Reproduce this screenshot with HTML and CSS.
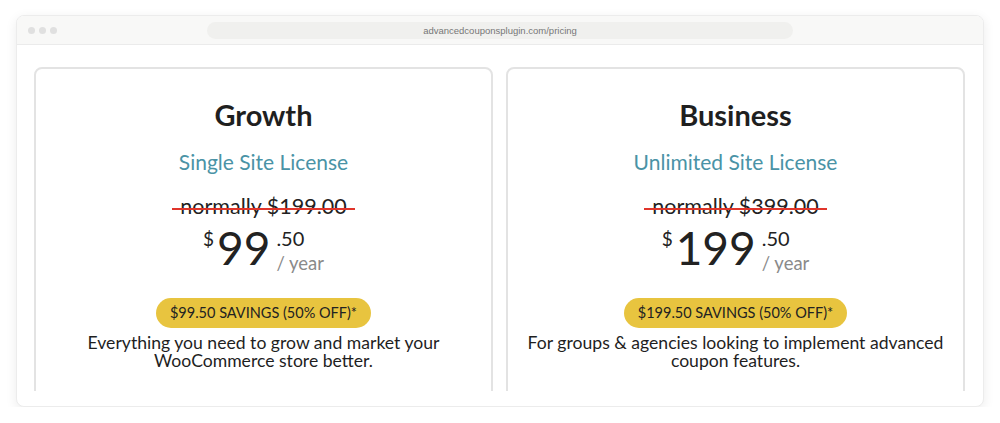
FILE: index.html
```html
<!DOCTYPE html>
<html lang="en">
<head>
    <meta charset="UTF-8">
    <meta name="viewport" content="width=device-width, initial-scale=1.0">
    <title>Pricing</title>
    <link rel="stylesheet" href="styles.css">
</head>
<body>

    <!-- Browser window -->
    <div class="window">
        <div class="titlebar">
            <div class="dots">
                <span class="dot"></span>
                <span class="dot"></span>
                <span class="dot"></span>
            </div>
            <div class="url">advancedcouponsplugin.com/pricing</div>
            <div></div>
        </div>

        <div class="content">
            <!-- Growth plan -->
            <div class="card">
                <h2 class="plan-name">Growth</h2>
                <p class="license">Single Site License</p>
                <p class="normal"><span class="strike">normally $199.00</span></p>
                <div class="price">
                    <span class="currency">$</span>
                    <span class="amount">99</span>
                    <span class="side">
                        <span class="cents">.50</span>
                        <span class="period">/ year</span>
                    </span>
                </div>
                <span class="savings">$99.50 SAVINGS (50% OFF)*</span>
                <p class="desc">Everything you need to grow and market your WooCommerce store better.</p>
            </div>

            <!-- Business plan -->
            <div class="card">
                <h2 class="plan-name">Business</h2>
                <p class="license">Unlimited Site License</p>
                <p class="normal"><span class="strike">normally $399.00</span></p>
                <div class="price">
                    <span class="currency">$</span>
                    <span class="amount">199</span>
                    <span class="side">
                        <span class="cents">.50</span>
                        <span class="period">/ year</span>
                    </span>
                </div>
                <span class="savings">$199.50 SAVINGS (50% OFF)*</span>
                <p class="desc">For groups &amp; agencies looking to implement advanced coupon features.</p>
            </div>
        </div>
    </div>

</body>
</html>
```

FILE: styles.css
```css
body {
    margin: 0;
    padding: 0;
    background-color: #ffffff;
    color: #222222;
    font-family: Lato, "Open Sans", sans-serif;
}

/* Browser window */
.window {
    margin: 15px 16px 0 16px;
    height: 392px;
    border: 1px solid #ececec;
    border-radius: 8px;
    box-shadow: 0 3px 12px rgba(0, 0, 0, 0.08);
    overflow: hidden;
    box-sizing: border-box;
    background-color: #ffffff;
}

.titlebar {
    height: 28px;
    background-color: #f8f8f7;
    border-bottom: 1px solid #ebebeb;
    display: grid;
    grid-template-columns: 1fr 586px 1fr;
    align-items: center;
}

.dots {
    display: flex;
    gap: 4px;
    padding-left: 11px;
}

.dot {
    width: 7px;
    height: 7px;
    border-radius: 50%;
    background-color: #e0e0e0;
}

.url {
    height: 17px;
    line-height: 17px;
    border-radius: 9px;
    background-color: #f0f0ee;
    color: #777777;
    font-family: "Liberation Sans", Arial, sans-serif;
    font-size: 9.5px;
    text-align: center;
}

/* Pricing cards */
.content {
    box-sizing: border-box;
    height: 346px;
    overflow: hidden;
    padding: 22px 18px 0 17px;
    display: grid;
    grid-template-columns: 1fr 1fr;
    gap: 13px;
}

.card {
    border: 2px solid #e3e3e3;
    border-radius: 8px;
    height: 400px;
    padding: 29px 8px 0 8px;
    text-align: center;
}

.plan-name {
    margin: 0;
    font-size: 29px;
    line-height: 34px;
    font-weight: 700;
    color: #1f1f1f;
}

.license {
    margin: 17px 0 0 0;
    font-size: 21px;
    line-height: 26px;
    color: #4a93a6;
}

.normal {
    margin: 18px 0 0 0;
    font-size: 21.5px;
    line-height: 26px;
    color: #222222;
}

.strike {
    position: relative;
    padding: 0 8px;
}

.strike::after {
    content: "";
    position: absolute;
    left: 0;
    right: 0;
    top: 15px;
    height: 2px;
    background-color: #e0352b;
}

.price {
    margin-top: 7px;
    display: flex;
    justify-content: center;
    align-items: flex-start;
}

.currency {
    font-size: 19px;
    line-height: 19px;
    margin-top: 3px;
    margin-right: 3px;
}

.amount {
    font-size: 46px;
    line-height: 44px;
}

.side {
    display: flex;
    flex-direction: column;
    align-items: flex-start;
    margin-left: 6px;
    margin-top: 3px;
}

.cents {
    font-size: 20px;
    line-height: 19px;
}

.period {
    margin-top: 6px;
    font-size: 18.5px;
    line-height: 18px;
    color: #8a8a8a;
}

.savings {
    display: inline-block;
    margin-top: 26px;
    padding: 0 14px;
    height: 30px;
    line-height: 30px;
    border-radius: 15px;
    background-color: #e8c43f;
    font-size: 14.5px;
    color: #222222;
}

.desc {
    margin: 6px 0 0 0;
    font-size: 17.6px;
    line-height: 18px;
    color: #1f1f1f;
}
```
